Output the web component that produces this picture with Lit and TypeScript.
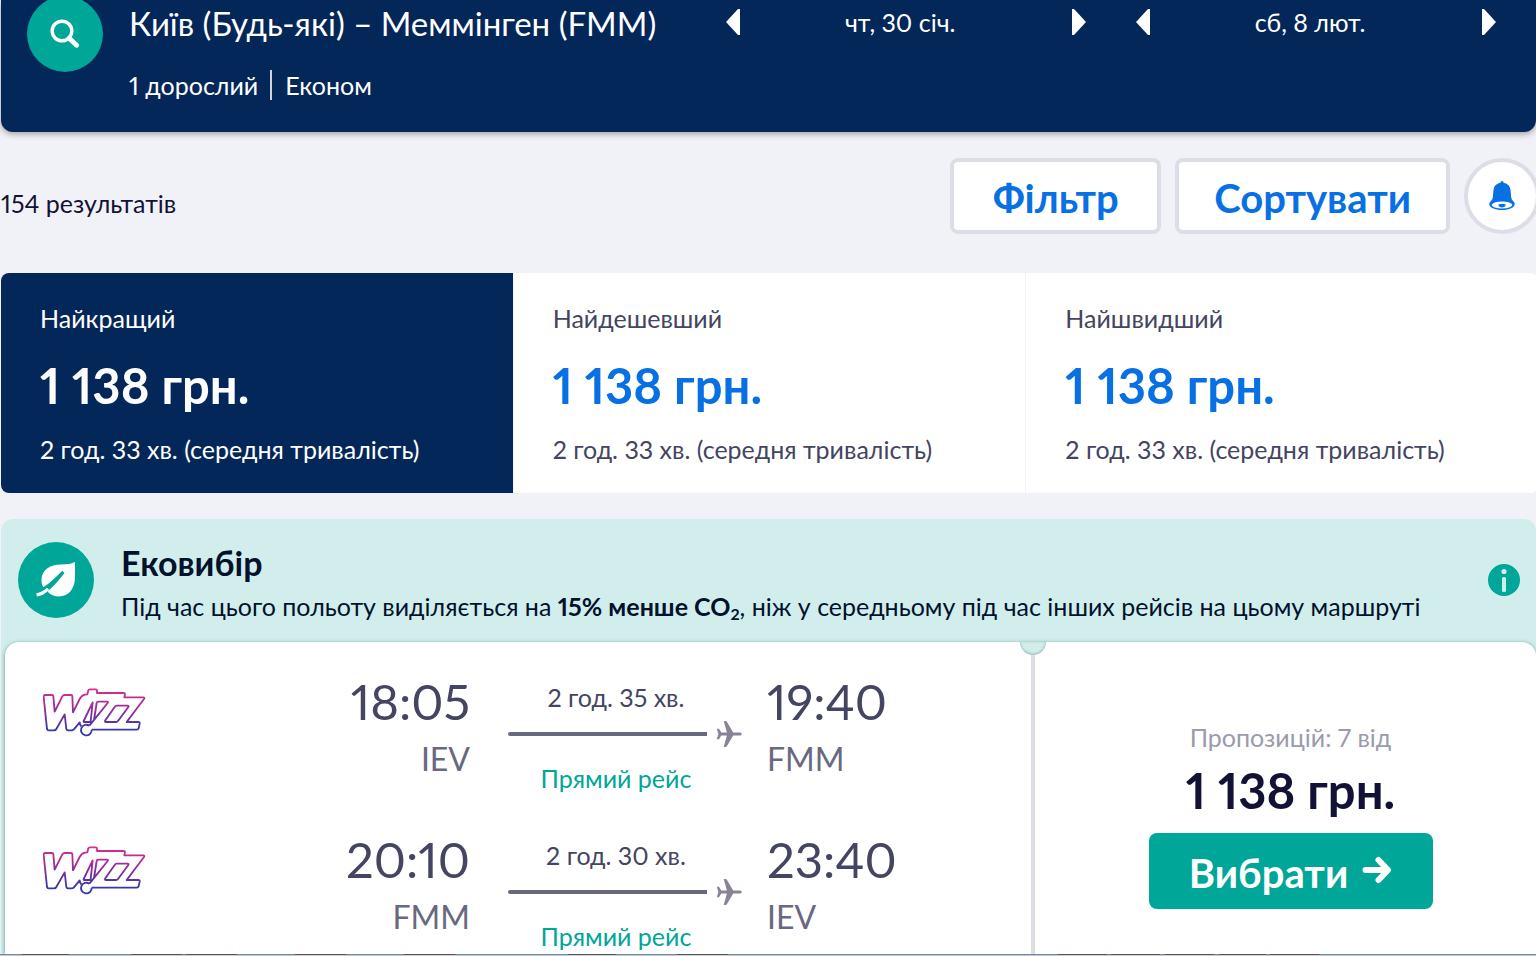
import { LitElement, html, css, svg } from "lit";
import { customElement, property } from "lit/decorators.js";
import { classMap } from "lit/directives/class-map.js";

interface Leg {
  from: string;
  to: string;
  departs: string;
  arrives: string;
  duration: string;
}

const DATES = ["чт, 30 січ.", "сб, 8 лют."];

const TABS = ["Найкращий", "Найдешевший", "Найшвидший"];

const LEGS: Leg[] = [
  { from: "IEV", to: "FMM", departs: "18:05", arrives: "19:40", duration: "2 год. 35 хв." },
  { from: "FMM", to: "IEV", departs: "20:10", arrives: "23:40", duration: "2 год. 30 хв." },
];

const DOCK_ITEMS = [
  [22, 47], [131, 51], [186, 51], [295, 51], [404, 51], [568, 48], [677, 51],
  [1058, 49], [1111, 49], [1165, 49], [1219, 47], [1270, 49],
];

const shared = css`
  *, *::before, *::after { box-sizing: border-box; }
  h1, h2, p { margin: 0; font-weight: 400; }
  button { margin: 0; padding: 0; border: 0; background: none; color: inherit; font: inherit; cursor: pointer; }
  svg { display: block; }
`;

@customElement("search-header")
export class SearchHeader extends LitElement {
  static styles = [shared, css`
    :host { display: block; position: relative; }
    .bar {
      display: flex; align-items: flex-start; padding: 0 39px 30px 26px;
      background: #042759; color: #fff; border-radius: 0 0 12px 12px;
      box-shadow: 0 2px 6px rgba(37, 32, 31, 0.4);
    }
    .search {
      flex: none; display: grid; place-items: center; width: 76px; height: 76px;
      margin: -4px 26px 0 0; border-radius: 50%; background: #00a698;
    }
    .trip { flex: 1; min-width: 0; }
    h1 { font-size: 33px; line-height: 46px; white-space: nowrap; }
    .details { display: flex; align-items: center; margin-top: 22px; font-size: 25px; line-height: 34px; }
    .details span + span { margin-left: 12px; padding-left: 13px; border-left: 2px solid #cdd4de; line-height: 30px; }
    .dates { display: flex; gap: 48px; width: 52.5%; }
    .date { flex: 1; display: flex; align-items: center; justify-content: space-between; height: 44px; font-size: 25px; line-height: 34px; }
    .date span { padding-right: 12px; }
  `];

  render() {
    return html`
      <header class="bar">
        <button class="search" aria-label="Змінити пошук">
          <svg width="32" height="32" viewBox="0 0 32 32" fill="none" stroke="#fff">
            <circle cx="13" cy="13" r="9.8" stroke-width="3.4" />
            <path d="M20.2 20.2 27.6 27.2" stroke-width="5" stroke-linecap="round" />
          </svg>
        </button>
        <div class="trip">
          <h1>Київ (Будь-які) – Меммінген (FMM)</h1>
          <p class="details"><span>1 дорослий</span><span>Економ</span></p>
        </div>
        <div class="dates">
          ${DATES.map((date) => html`
            <div class="date">
              <button aria-label="Попередній день">
                <svg width="16" height="26" viewBox="0 0 16 26"><path d="M15 0v26h-2L1 13 13 0z" fill="#fff" /></svg>
              </button>
              <span>${date}</span>
              <button aria-label="Наступний день">
                <svg width="16" height="26" viewBox="0 0 16 26"><path d="M1 0v26h2l12-13L3 0z" fill="#fff" /></svg>
              </button>
            </div>`)}
        </div>
      </header>`;
  }
}

@customElement("results-toolbar")
export class ResultsToolbar extends LitElement {
  static styles = [shared, css`
    :host { display: flex; align-items: center; gap: 14px; margin-right: -4px; }
    p { flex: 1; padding-top: 14px; font-size: 25px; line-height: 34px; color: #111236; }
    .action {
      min-width: 211px; height: 76px; padding: 4px 35px 0; border: 4px solid #dddde5; border-radius: 8px;
      background: #fff; color: #0770e3; font-size: 40px; font-weight: 700; line-height: 50px;
    }
    .bell {
      display: grid; place-items: center; width: 76px; height: 76px;
      border: 4px solid #dddde5; border-radius: 50%; background: #fff;
    }
  `];

  render() {
    return html`
      <p>154 результатів</p>
      <button class="action">Фільтр</button>
      <button class="action">Сортувати</button>
      <button class="bell" aria-label="Сповіщення про ціну">
        <svg width="26" height="30" viewBox="0 0 26 30">
          <path d="M13 0c1 0 1.2 1 1.8 1.7 4 .8 6.3 3.3 6.7 7.3l.7 7c.2 2 .9 3.1 2 4.2 1 .9 1.5 1.7 1.5 2.8 0 3.5-5.5 6-12.7 6S.3 26.5.3 23c0-1.1.5-1.9 1.5-2.8 1.1-1.1 1.8-2.2 2-4.2l.7-7c.4-4 2.7-6.5 6.7-7.3C11.8 1 12 0 13 0z" fill="#0770e3" />
          <ellipse cx="13" cy="24" rx="10.3" ry="3.5" fill="#fff" />
          <path d="M9.3 23.4q3.7-1.2 7.4 0c0 4-7.4 4-7.4 0z" fill="#0770e3" />
        </svg>
      </button>`;
  }
}

@customElement("sort-tabs")
export class SortTabs extends LitElement {
  static styles = [shared, css`
    :host { display: grid; grid-template-columns: repeat(3, 1fr); gap: 1px; margin-right: -2px; border-radius: 8px; overflow: hidden; }
    .tab { padding: 28px 39px 27px; background: #fff; color: #444560; font-size: 25px; line-height: 34px; text-align: left; }
    .tab span { display: block; white-space: nowrap; }
    .tab .price { margin: 20px 0 17px; color: #0770e3; font-size: 49px; font-weight: 700; line-height: 60px; }
    .tab.active { background: #042759; color: #fff; }
    .tab.active .price { color: #fff; }
  `];

  render() {
    return TABS.map((label, i) => html`
      <button class=${classMap({ tab: true, active: i === 0 })} aria-pressed=${i === 0}>
        <span>${label}</span>
        <span class="price">1 138 грн.</span>
        <span>2 год. 33 хв. (середня тривалість)</span>
      </button>`);
  }
}

@customElement("flight-leg")
export class FlightLeg extends LitElement {
  @property({ attribute: false }) leg!: Leg;

  static styles = [shared, css`
    :host { display: grid; grid-template-columns: 103px 362fr 234px 289fr; height: 158px; padding-left: 38px; }
    .logo { margin-top: 26px; }
    .point { padding: 9px 25px 0; }
    .departure { padding-right: 33px; text-align: right; }
    .time { font-size: 49px; line-height: 60px; color: #444560; }
    .code { margin-top: 6px; font-size: 32px; line-height: 44px; color: #68697f; }
    .departure { padding-right: 38px; }
    .route { padding-top: 18px; font-size: 25px; line-height: 34px; text-align: center; color: #444560; }
    .route p { padding-right: 18px; }
    .track { display: flex; align-items: center; gap: 9px; margin: 7px 0 14px; }
    .line { flex: 1; height: 4px; border-radius: 2px 0 0 2px; background: #68697f; }
    .stops { color: #00a698; }
  `];

  render() {
    const { from, to, departs, arrives, duration } = this.leg;
    return html`
      <svg class="logo" width="103" height="50" viewBox="41 25 309 150" fill="none" role="img" aria-label="Wizz Air">
        <defs>
          <linearGradient id="wizz" gradientUnits="userSpaceOnUse" x1="0" y1="28" x2="0" y2="168">
            <stop offset="0" stop-color="#d92f8c" />
            <stop offset=".5" stop-color="#8b2c9c" />
            <stop offset=".85" stop-color="#343aa8" />
            <stop offset="1" stop-color="#343aa8" />
          </linearGradient>
        </defs>
        <g stroke="url(#wizz)" stroke-width="5.5" stroke-linejoin="round">
          <path d="M156 140Q151 134 151 128L133 150Q131 152 126 152H116Q112 152 111 148L106 104 81 148Q79 152 74 152H58Q54 152 53 148L43 52Q43 46 48 46H68Q72 46 72 50L76 96 99 50Q101 46 106 46H124Q129 46 129 50L131 98 151 58Q157 47 167 45L174 44 177 32Q178 29 182 29H199Q203 29 203 33V40H283Q287 40 287 44L285 53H341Q347 53 344 58L292 127H327Q332 127 331 132L328 145Q327 150 322 150H187" />
          <path d="M163 124 190 68 184 124Q184 127 181 127H166Q162 127 163 124zM194 121 202 70Q203 66 207 66H233Q238 66 235 70L190 126 180 138" />
          <path d="M262 78H294Q300 78 297 82L266 124Q264 127 260 127H230Q225 127 228 122L256 82Q258 78 262 78z" />
          <path d="M180 138A16 16 0 1 0 187 150" />
        </g>
      </svg>
      <div class="point departure">
        <p class="time">${departs}</p>
        <p class="code">${from}</p>
      </div>
      <div class="route">
        <p>${duration}</p>
        <div class="track">
          <span class="line"></span>
          <svg width="26" height="26" viewBox="0 0 26 26" fill="#8a8296">
            <path d="M23.5 11.4c1.3 0 2.2.7 2.2 1.6s-.9 1.6-2.2 1.6h-6.3L11 25q-.5.9-1.4.9H7.7l3.2-11.3H5.3L3 18.2H.8L2.4 13 .8 7.8H3l2.3 3.6h5.6L7.7.1h1.9Q10.5.1 11 1l6.2 10.4z" />
          </svg>
        </div>
        <p class="stops">Прямий рейс</p>
      </div>
      <div class="point">
        <p class="time">${arrives}</p>
        <p class="code">${to}</p>
      </div>`;
  }
}

@customElement("eco-ticket")
export class EcoTicket extends LitElement {
  static styles = [shared, css`
    :host { display: flex; flex-direction: column; background: #d1eeec; border-radius: 12px 12px 0 0; }
    .eco { display: flex; align-items: center; padding: 18px 16px 19px 17px; color: #02122c; }
    .leaf { flex: none; display: grid; place-items: center; width: 76px; height: 76px; margin-right: 27px; border-radius: 50%; background: #00a698; }
    .message { flex: 1; padding-top: 4px; font-size: 25px; line-height: 34px; }
    h2 { margin-bottom: 4px; font-size: 34px; font-weight: 700; line-height: 44px; }
    sub { font-size: 16px; line-height: 0; vertical-align: -4px; }
    .ticket {
      flex: 1; display: grid; grid-template-columns: 1026fr 505fr; min-height: 0; margin-left: 4px;
      background: #fff; border-radius: 14px 14px 0 0; box-shadow: 0 1px 4px rgba(0, 70, 65, 0.5);
    }
    .legs { padding-top: 20px; }
    .offer {
      position: relative; display: flex; flex-direction: column; align-items: center;
      padding: 78px 0 0 10px; border-left: 4px solid #dddde5; text-align: center;
    }
    .notch {
      position: absolute; top: 0; left: -15px; width: 26px; height: 13px; border-radius: 0 0 13px 13px;
      background: #d1eeec; box-shadow: inset 0 -1px 3px rgba(0, 70, 65, 0.3);
    }
    .deals { font-size: 25px; line-height: 34px; color: #9a9bab; }
    .price { margin: 6px 0 13px; font-size: 49px; font-weight: 700; line-height: 60px; color: #111236; }
    .select {
      display: flex; align-items: center; justify-content: center; gap: 14px; width: 284px; height: 76px; padding-top: 4px;
      border-radius: 8px; background: #00a698; color: #fff; font-size: 40px; font-weight: 700; line-height: 50px;
    }
    .select svg { margin-bottom: 6px; }
  `];

  render() {
    return html`
      <div class="eco">
        <span class="leaf">
          <svg width="40" height="36" viewBox="0 0 40 36">
            <path d="M39 0C35 1.8 31 2.5 25 2.5 14 2.5 5.5 8 5.5 18c0 3 .5 5 1.8 7.2C13.5 21.5 20 15 26.3 8.800l2.2 2.2C23 18 17.5 24.5 11.5 29.5c3 3.4 6.7 5 11.5 5C33 34.5 39 26 39 15z" fill="#fff" />
            <path d="M.3 31.2C4.5 30.5 8 28.5 11 25.8l2.3 1.9C9.5 31.5 5.5 34 .9 34.5z" fill="#fff" />
          </svg>
        </span>
        <div class="message">
          <h2>Ековибір</h2>
          <p>Під час цього польоту виділяється на <b>15% менше CO<sub>2</sub></b>, ніж у середньому під час інших рейсів на цьому маршруті</p>
        </div>
        <button aria-label="Докладніше">
          <svg width="32" height="32" viewBox="0 0 32 32">
            <circle cx="16" cy="16" r="16" fill="#00a698" />
            <circle cx="16" cy="7.5" r="2.6" fill="#d1eeec" />
            <rect x="14" y="13" width="4" height="15" rx="1.5" fill="#d1eeec" />
          </svg>
        </button>
      </div>
      <article class="ticket">
        <div class="legs">${LEGS.map((leg) => html`<flight-leg .leg=${leg}></flight-leg>`)}</div>
        <div class="offer">
          <span class="notch"></span>
          <p class="deals">Пропозицій: 7 від</p>
          <p class="price">1 138 грн.</p>
          <button class="select">Вибрати
            <svg width="30" height="28" viewBox="0 0 30 28" fill="none" stroke="#fff" stroke-width="6" stroke-linecap="round" stroke-linejoin="round">
              <path d="M3.5 14H25M16.5 4 26 14 16.5 24" />
            </svg>
          </button>
        </div>
      </article>`;
  }
}

@customElement("app-root")
export class AppRoot extends LitElement {
  static styles = [shared, css`
    :host {
      display: flex; flex-direction: column; height: 100vh; overflow: hidden; background: #f1f2f8;
      font-family: Lato, "Open Sans", sans-serif; font-variant-numeric: proportional-nums;
    }
    main { flex: 1; display: flex; flex-direction: column; min-height: 0; padding-left: 1px; overflow: hidden; }
    results-toolbar { margin-top: 26px; }
    sort-tabs { margin: 39px -2px 26px 0; }
    eco-ticket { flex: 1; min-height: 0; }
    .dock { flex: none; width: 100%; height: 2px; z-index: 1; }
  `];

  render() {
    return html`
      <main>
        <search-header></search-header>
        <results-toolbar></results-toolbar>
        <sort-tabs></sort-tabs>
        <eco-ticket></eco-ticket>
      </main>
      <svg class="dock" viewBox="0 0 1536 2" preserveAspectRatio="none" aria-hidden="true">
        <rect width="1536" height="2" fill="#b9c9d9" />
        <rect width="1536" height="1" fill="#77879a" />
        ${DOCK_ITEMS.map(([x, w]) => svg`
          <rect x=${x} width=${w} height="2" fill="#cfcfd3" />
          <rect x=${x} width=${w} height="1" fill="#5a5558" />`)}
      </svg>`;
  }
}
